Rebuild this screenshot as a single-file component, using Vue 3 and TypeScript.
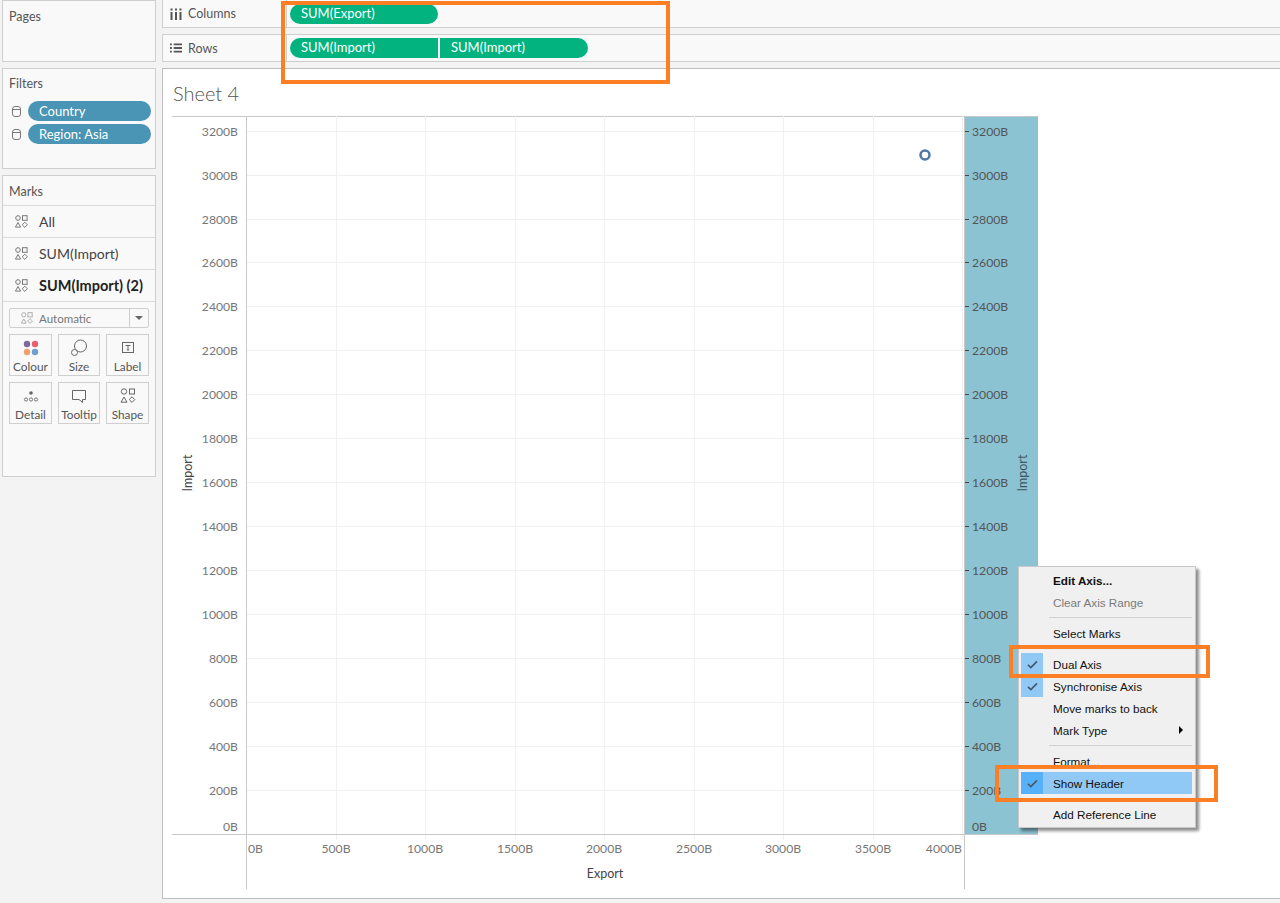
<template>
  <div class="workspace">
    <aside class="side">
      <section class="card pages">
        <div class="card-title">Pages</div>
      </section>

      <section class="card filters">
        <div class="card-title">Filters</div>
        <div v-for="f in filters" :key="f" class="filter-row">
          <svg class="cyl" width="9" height="11" viewBox="0 0 9 11">
            <rect x="0.5" y="0.5" width="8" height="10" rx="2.5" fill="#f9f9f9" stroke="#777" />
            <path d="M1 3.5h7" stroke="#777" fill="none" />
          </svg>
          <span class="filter-pill">{{ f }}</span>
        </div>
      </section>

      <section class="card marks">
        <div class="card-title marks-title">Marks</div>
        <div
          v-for="row in markRows"
          :key="row.label"
          class="mark-row"
          :class="{ active: row.active }"
        >
          <svg class="shapes" width="13" height="13" viewBox="0 0 13 13">
            <g fill="none" stroke="#777">
              <circle cx="3" cy="3" r="2.3" />
              <rect x="7.5" y="0.7" width="4.6" height="4.6" />
              <path d="M3 7.5l2.6 4.6H.4z" />
              <path d="M9.8 7.2l2.6 2.6-2.6 2.6-2.6-2.6z" />
            </g>
          </svg>
          <span>{{ row.label }}</span>
        </div>

        <div class="mark-type">
          <div class="mark-type-main">
            <svg width="12" height="12" viewBox="0 0 13 13">
              <g fill="none" stroke="#aaa">
                <circle cx="3" cy="3" r="2.3" />
                <rect x="7.5" y="0.7" width="4.6" height="4.6" />
                <path d="M3 7.5l2.6 4.6H.4z" />
                <path d="M9.8 7.2l2.6 2.6-2.6 2.6-2.6-2.6z" />
              </g>
            </svg>
            <span>Automatic</span>
          </div>
          <div class="mark-type-arrow"></div>
        </div>

        <div class="mark-buttons">
          <div class="mark-btn">
            <svg width="18" height="18" viewBox="0 0 18 18">
              <circle cx="5" cy="5" r="3.2" fill="#7b6a9c" />
              <circle cx="13" cy="5" r="3.2" fill="#e8606c" />
              <circle cx="5" cy="13" r="3.2" fill="#f0a070" />
              <circle cx="13" cy="13" r="3.2" fill="#6f9fd0" />
            </svg>
            <span>Colour</span>
          </div>
          <div class="mark-btn">
            <svg width="18" height="18" viewBox="0 0 18 18">
              <g fill="none" stroke="#666">
                <circle cx="10.5" cy="7" r="6" />
                <circle cx="4.500" cy="13.500" r="3" fill="#f9f9f9" />
              </g>
            </svg>
            <span>Size</span>
          </div>
          <div class="mark-btn">
            <svg width="18" height="18" viewBox="0 0 18 18">
              <rect x="3.500" y="3.500" width="11" height="10" fill="none" stroke="#666" />
              <path d="M6.500 6.500h5M9 6.500v4.500M7.800 11h2.400" fill="none" stroke="#666" />
            </svg>
            <span>Label</span>
          </div>
          <div class="mark-btn">
            <svg width="18" height="18" viewBox="0 0 18 18">
              <circle cx="9" cy="6" r="1.8" fill="#666" />
              <g fill="none" stroke="#777">
                <circle cx="4" cy="12.5" r="1.6" />
                <circle cx="9" cy="12.5" r="1.6" />
                <circle cx="14" cy="12.5" r="1.6" />
              </g>
            </svg>
            <span>Detail</span>
          </div>
          <div class="mark-btn">
            <svg width="18" height="18" viewBox="0 0 18 18">
              <path d="M2.500 3.500h13v9h-3v3l-3.500-3h-6.500z" fill="none" stroke="#666" />
            </svg>
            <span>Tooltip</span>
          </div>
          <div class="mark-btn">
            <svg width="18" height="18" viewBox="0 0 18 18">
              <g fill="none" stroke="#666">
                <circle cx="5" cy="4.500" r="2.700" />
                <rect x="10.500" y="2" width="5" height="5" />
                <path d="M5 10l3 5.200H2z" />
                <path d="M13 9.800l2.800 2.800-2.800 2.800-2.800-2.800z" />
              </g>
            </svg>
            <span>Shape</span>
          </div>
        </div>
      </section>
    </aside>

    <main class="main">
      <div class="shelf columns-shelf">
        <div class="shelf-label">
          <svg width="12" height="12" viewBox="0 0 12 12">
            <path d="M1.500 4v8M6 4v8M10.500 4v8M1.500 0.500v2M6 0.500v2M10.500 0.500v2" fill="none" stroke="#555" stroke-width="2" />
          </svg>
          <span>Columns</span>
        </div>
        <div class="shelf-pills">
          <span class="pill full">SUM(Export)</span>
        </div>
      </div>

      <div class="shelf rows-shelf">
        <div class="shelf-label">
          <svg width="12" height="12" viewBox="0 0 13 12">
            <path d="M0 2h2M4 2h9M0 6h2M4 6h9M0 10h2M4 10h9" fill="none" stroke="#555" stroke-width="2" />
          </svg>
          <span>Rows</span>
        </div>
        <div class="shelf-pills">
          <span class="pill left">SUM(Import)</span>
          <span class="pill right">SUM(Import)</span>
        </div>
      </div>

      <section class="sheet">
        <h1 class="sheet-title">Sheet 4</h1>
        <svg class="chart" width="868" height="774" viewBox="172 116 868 774">
          <rect x="965" y="116" width="73" height="718" fill="#8cc3d3" />

          <line x1="172" y1="116.500" x2="1038" y2="116.500" class="axis" />

          <g v-for="t in yTicks" :key="t.label">
            <line v-if="t.grid" x1="247" :y1="t.y + 0.5" x2="964" :y2="t.y + 0.5" class="grid" />
            <line v-if="t.grid" x1="965" :y1="t.y + 0.5" x2="969" :y2="t.y + 0.5" class="tick-right" />
            <text x="238" :y="t.labelY" text-anchor="end" class="tick-label">{{ t.label }}</text>
            <text x="972" :y="t.labelY" class="tick-label dark">{{ t.label }}</text>
          </g>

          <g v-for="t in xTicks" :key="t.label">
            <line :x1="t.x + 0.5" y1="116" :x2="t.x + 0.5" y2="840" class="grid" />
            <text :x="t.labelX" y="853" :text-anchor="t.anchor" class="tick-label">{{ t.label }}</text>
          </g>

          <line x1="246.500" y1="116" x2="246.500" y2="889" class="axis" />
          <line x1="964.500" y1="116" x2="964.500" y2="889" class="axis" />
          <line x1="172" y1="834.500" x2="1038" y2="834.500" class="axis" />

          <circle cx="925" cy="155" r="4.500" fill="none" stroke="#4f78a8" stroke-width="2.500" />

          <text x="605" y="878" text-anchor="middle" class="axis-title">Export</text>
          <text transform="translate(192 473) rotate(-90)" text-anchor="middle" class="axis-title">Import</text>
          <text transform="translate(1027 473) rotate(-90)" text-anchor="middle" class="axis-title dark">Import</text>
        </svg>
      </section>
    </main>

    <div class="menu">
      <div
        v-for="(item, i) in menuItems"
        :key="i"
        :class="item.sep ? 'menu-sep' : 'menu-item'"
      >
        <template v-if="!item.sep">
          <div
            class="menu-check"
            :class="{ checked: item.checked, hot: item.hot }"
          >
            <svg v-if="item.checked" width="11" height="9" viewBox="0 0 12 10">
              <path d="M1 5.500l3.200 3L11 1.500" fill="none" stroke="#46586a" stroke-width="1.800" />
            </svg>
          </div>
          <div class="menu-text" :class="{ bold: item.bold, off: item.off, hot: item.hot }">
            {{ item.label }}
            <span v-if="item.sub" class="menu-sub"></span>
          </div>
        </template>
      </div>
    </div>

    <div class="callout callout-shelf"></div>
    <div class="callout callout-dual"></div>
    <div class="callout callout-header"></div>
  </div>
</template>

<script setup lang="ts">
type MenuItem = {
  label?: string
  sep?: boolean
  bold?: boolean
  off?: boolean
  checked?: boolean
  hot?: boolean
  sub?: boolean
}

const filters = ['Country', 'Region: Asia']

const markRows = [
  { label: 'All', active: false },
  { label: 'SUM(Import)', active: false },
  { label: 'SUM(Import) (2)', active: true },
]

const yPositions = [826, 790, 746, 702, 658, 614, 570, 526, 482, 438, 394, 350, 306, 262, 219, 175, 131]
const yTicks = yPositions.map((y, i) => ({
  label: `${i * 200}B`,
  y,
  labelY: y + 4.5,
  grid: i > 0,
}))

const xTicks = [0, 500, 1000, 1500, 2000, 2500, 3000, 3500, 4000].map((v, i) => {
  const x = Math.floor(246.5 + i * 89.5)
  let anchor = 'middle'
  let labelX = x
  if (i === 0) {
    anchor = 'start'
    labelX = 248
  } else if (i === 8) {
    anchor = 'end'
    labelX = 962
  }
  return { label: `${v}B`, x, labelX, anchor }
})

const menuItems: MenuItem[] = [
  { label: 'Edit Axis...', bold: true },
  { label: 'Clear Axis Range', off: true },
  { sep: true },
  { label: 'Select Marks' },
  { sep: true },
  { label: 'Dual Axis', checked: true },
  { label: 'Synchronise Axis', checked: true },
  { label: 'Move marks to back' },
  { label: 'Mark Type', sub: true },
  { sep: true },
  { label: 'Format...' },
  { label: 'Show Header', checked: true, hot: true },
  { sep: true },
  { label: 'Add Reference Line' },
]
</script>

<style>
html,
body {
  margin: 0;
  background: #f3f3f3;
}
</style>

<style scoped>
.workspace {
  position: relative;
  width: 1280px;
  height: 903px;
  overflow: hidden;
  box-sizing: border-box;
  padding-left: 2px;
  display: grid;
  grid-template-columns: 154px 1118px;
  column-gap: 6px;
  background: #f3f3f3;
  font-family: Lato, "Liberation Sans", sans-serif;
  color: #555;
}

.side {
  display: flex;
  flex-direction: column;
}

.card {
  box-sizing: border-box;
  background: #f9f9f9;
  border: 1px solid #cfcfcf;
}

.card-title {
  font-size: 12.5px;
  color: #555;
  line-height: 16px;
  padding: 7px 0 0 6px;
}

.pages .card-title,
.marks-title {
  padding-top: 8px;
}

.pages {
  height: 62px;
  margin-bottom: 6px;
}

.filters {
  height: 101px;
  margin-bottom: 6px;
}

.filters .card-title {
  margin-bottom: 9px;
}

.filter-row {
  display: flex;
  align-items: center;
  height: 20px;
  margin-bottom: 3px;
  padding-left: 9px;
}

.cyl {
  margin-right: 7px;
}

.filter-pill {
  width: 123px;
  height: 20px;
  line-height: 20px;
  border-radius: 10px;
  background: #4a95b5;
  color: #fff;
  font-size: 13px;
  padding-left: 11px;
  box-sizing: border-box;
}

.marks {
  height: 302px;
}

.marks-title {
  height: 30px;
  box-sizing: border-box;
  border-bottom: 1px solid #dcdcdc;
}

.mark-row {
  height: 32px;
  box-sizing: border-box;
  border-bottom: 1px solid #dcdcdc;
  display: flex;
  align-items: center;
  padding-left: 12px;
  font-size: 14px;
  color: #444;
}

.mark-row span {
  margin-left: 11px;
}

.mark-row.active {
  font-weight: 700;
  font-size: 14.500px;
  color: #222;
}

.mark-type {
  display: flex;
  height: 20px;
  margin: 6px 6px 6px 6px;
  border: 1px solid #cfcfcf;
  border-radius: 2px;
  box-sizing: border-box;
  font-size: 11.500px;
  color: #777;
}

.mark-type-main {
  flex: 1;
  display: flex;
  align-items: center;
  gap: 6px;
  padding-left: 11px;
  border-right: 1px solid #cfcfcf;
}

.mark-type-arrow {
  width: 18px;
  position: relative;
}

.mark-type-arrow::after {
  content: "";
  position: absolute;
  left: 5px;
  top: 7px;
  border-left: 4px solid transparent;
  border-right: 4px solid transparent;
  border-top: 4px solid #666;
}

.mark-buttons {
  display: grid;
  grid-template-columns: 43px 42px 43px;
  grid-auto-rows: 42px;
  column-gap: 6px;
  row-gap: 6px;
  margin: 0 6px;
}

.mark-btn {
  box-sizing: border-box;
  border: 1px solid #cfcfcf;
  display: flex;
  flex-direction: column;
  align-items: center;
  padding-top: 4px;
  font-size: 11.800px;
  color: #555;
}

.mark-btn span {
  line-height: 15px;
  margin-top: 2px;
}

.main {
  display: flex;
  flex-direction: column;
}

.shelf {
  box-sizing: border-box;
  display: flex;
  background: #f9f9f9;
  border: 1px solid #cfcfcf;
  border-right: none;
}

.columns-shelf {
  height: 28px;
  border-top: none;
  margin-bottom: 6px;
}

.rows-shelf {
  height: 28px;
  margin-bottom: 6px;
}

.shelf-label {
  width: 124px;
  box-sizing: border-box;
  display: flex;
  align-items: center;
  gap: 6px;
  padding-left: 7px;
  font-size: 12.500px;
  color: #555;
  border-right: 1px solid #cfcfcf;
}

.shelf-pills {
  display: flex;
  gap: 2px;
  padding: 3px 0 0 3px;
}

.columns-shelf .shelf-pills {
  padding-top: 4px;
}

.pill {
  box-sizing: border-box;
  width: 148px;
  height: 20px;
  line-height: 19px;
  padding-left: 11px;
  background: #02b380;
  color: #fff;
  font-size: 13px;
}

.pill.full {
  border-radius: 10px;
}

.pill.left {
  border-radius: 10px 0 0 10px;
}

.pill.right {
  border-radius: 0 10px 10px 0;
  padding-left: 11px;
}

.sheet {
  box-sizing: border-box;
  height: 831px;
  background: #fff;
  border: 1px solid #bdbdbd;
  border-right: none;
  padding-left: 9px;
}

.sheet-title {
  margin: 0;
  height: 47px;
  font-size: 20px;
  font-weight: 300;
  line-height: 48px;
  color: #555;
  padding-left: 1px;
}

.chart {
  display: block;
}

.axis {
  stroke: #c8c8c8;
  stroke-width: 1;
}

.grid {
  stroke: #f0f0f0;
  stroke-width: 1;
}

.tick-right {
  stroke: #444;
  stroke-width: 1;
}

.tick-label {
  font-size: 12.200px;
  fill: #777;
}

.tick-label.dark {
  fill: #555;
}

.axis-title {
  font-size: 12.500px;
  fill: #444;
}

.axis-title.dark {
  fill: #3f5560;
}

.menu {
  position: absolute;
  left: 1018px;
  top: 566px;
  width: 178px;
  height: 262px;
  box-sizing: border-box;
  padding: 2px 3px 2px 2px;
  background: #f0f0f0;
  border: 1px solid #c9c9c9;
  box-shadow: 3px 3px 3px rgba(0, 0, 0, 0.45);
  font-family: "Liberation Sans", Arial, sans-serif;
  font-size: 11.700px;
  color: #111;
}

.menu-item {
  display: flex;
  height: 22px;
}

.menu-check {
  width: 22px;
  height: 22px;
  display: flex;
  align-items: center;
  justify-content: center;
}

.menu-check.checked {
  background: #90c8f6;
}

.menu-check.hot {
  background: #56b0fa;
}

.menu-text {
  flex: 1;
  position: relative;
  line-height: 24px;
  padding-left: 10px;
}

.menu-text.hot {
  background: #90c8f6;
}

.menu-text.bold {
  font-weight: 700;
}

.menu-text.off {
  color: #7a7a7a;
}

.menu-sub {
  position: absolute;
  right: 9px;
  top: 7px;
  border-top: 4px solid transparent;
  border-bottom: 4px solid transparent;
  border-left: 4px solid #000;
}

.menu-sep {
  height: 9px;
  margin-left: 28px;
  box-sizing: border-box;
  border-bottom: 1px solid #d0d0d0;
  transform: translateY(-4px);
}

.callout {
  position: absolute;
  box-sizing: border-box;
  border: 4px solid #fc7f26;
  pointer-events: none;
}

.callout-shelf {
  left: 281px;
  top: 1px;
  width: 389px;
  height: 83px;
}

.callout-dual {
  left: 1009px;
  top: 645px;
  width: 201px;
  height: 33px;
}

.callout-header {
  left: 995px;
  top: 765px;
  width: 223px;
  height: 37px;
}
</style>
